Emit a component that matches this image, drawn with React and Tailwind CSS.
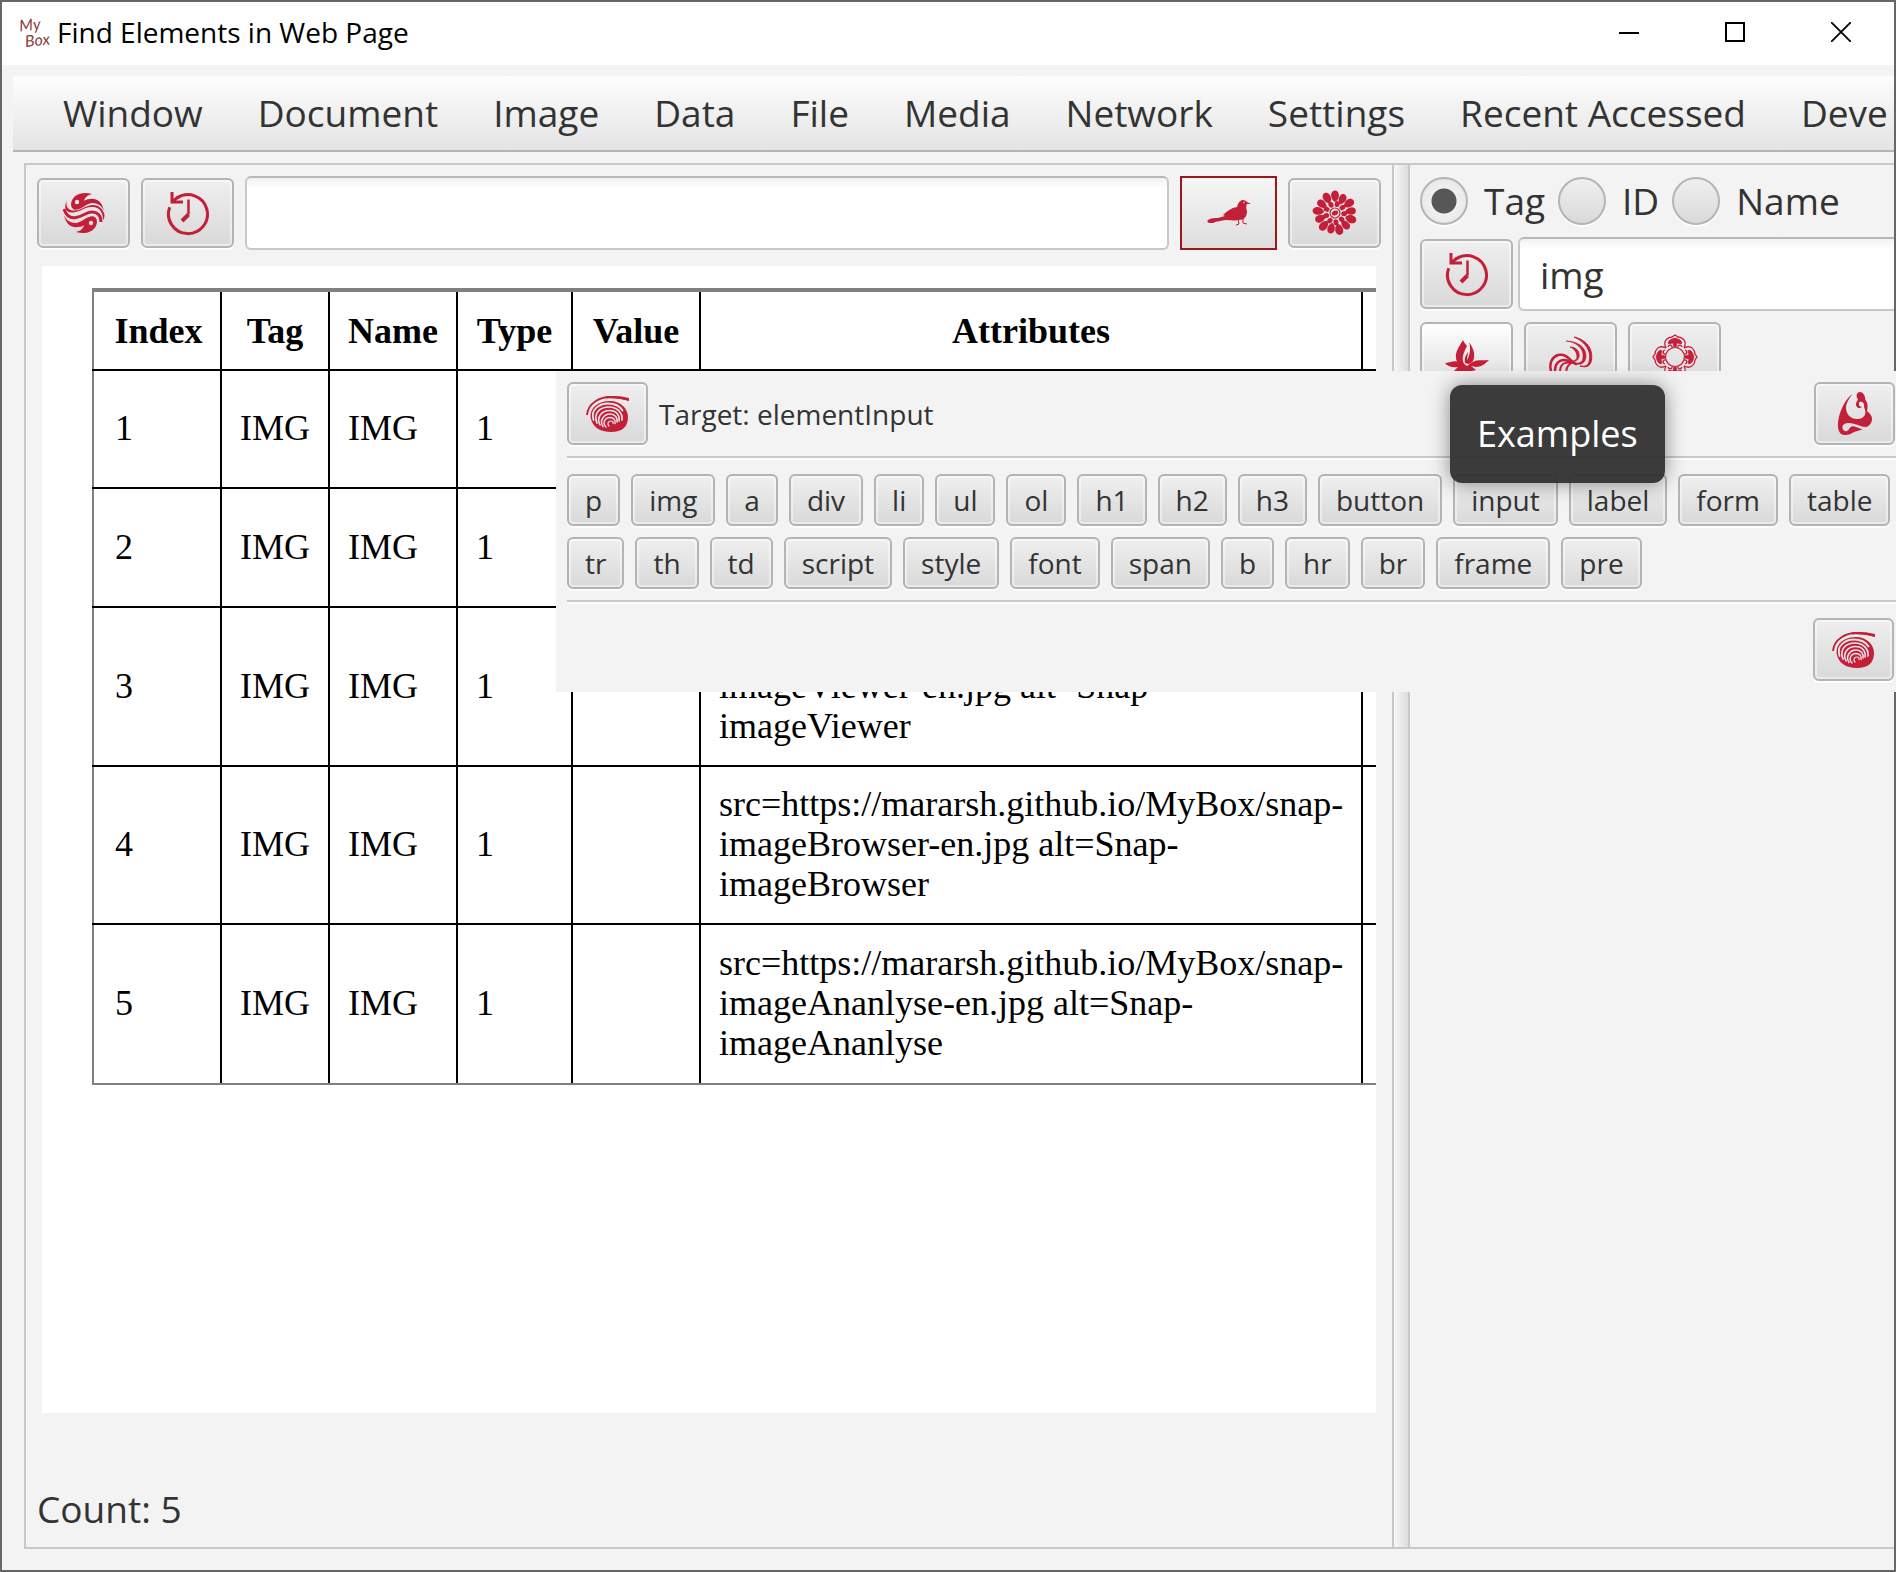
import React from "react";

const RED = "#c41f38";
const btnFace =
  "flex items-center justify-center shrink-0 rounded-md border-2 border-[#b4b4b4] bg-linear-to-b from-[#efefef] to-[#d9d9d9] shadow-[inset_0_0_0_2px_rgba(255,255,255,0.45),0_2px_0_#fdfdfd]";

function KnotIcon() {
  return (
    <svg width="42" height="42" viewBox="0 0 42 42" fill="none" stroke={RED}>
      <path d="M29 2C20-1 9 2 8 12c0 5 4 7 8 5 4-1 7-5 13-6 6 0 10 3 12 8C39 9 33 6 27 7c-3 0-5 1-6 2 1-4 4-6 8-7Z" fill={RED} stroke="none" />
      <circle cx="14" cy="10" r="2.2" fill="#e8e8e8" stroke="none" />
      <path d="M13 40c9 3 20 0 21-10 0-5-4-7-8-5-4 1-7 5-13 6-6 0-10-3-12-8 2 10 8 13 14 12 3 0 5-1 6-2-1 4-4 6-8 7Z" fill={RED} stroke="none" />
      <circle cx="28" cy="31" r="2.2" fill="#dedede" stroke="none" />
      <path d="M4 8c-4 8-1 13 6 12.500 9-1 12-6.500 20-5.500 6 0 10 5 10 13 1-1 1.500-3 1.500-5C40 16 35 13 30 13c-8 0-12 6.500-20 5.500C5 18 2 14 4 8Z" fill={RED} stroke="none" />
      <path d="M1 17c2 7 6 9.500 12 8.500 7-1 10-5.500 16-5.500 5 0 9 3 9 10" strokeWidth="3" />
    </svg>
  );
}

function HistoryIcon() {
  return (
    <svg width="46" height="46" viewBox="0 0 46 46" fill="none" stroke={RED} strokeWidth="3">
      <path d="M12 8A19.500 19.500 0 1 1 4.700 17.300" />
      <path d="M7 2v10h11" />
      <path d="M7 12l6-5" />
      <path d="M23.500 9.500v15" strokeWidth="2.500" />
      <path d="M23.500 24.500l-6.500 6.500" strokeWidth="4" />
    </svg>
  );
}

function BirdIcon() {
  return (
    <svg width="44" height="28" viewBox="0 0 44 28" fill={RED}>
      <path d="M1 21c3-2 7-2 10-2l7-2-2-1c4-4 8-7 14-8 1-4 3-7 6-7 2 0 3 1 4 2l4 2-4 0c-1 2-1 4 0 7 0 6-3 9-8 9-4 1-9 0-13 0-5 1-9 1-13 3l-4 0c-2-1-2-2-1-3Z" />
      <path d="M31 20l1 5-3 1M36 20v4l4 1" fill="none" stroke={RED} strokeWidth="1" />
      <circle cx="37" cy="3.500" r="0.700" fill="#eee" />
    </svg>
  );
}

function FlowerIcon() {
  const outer = Array.from({ length: 13 }, (_, i) => (i * 360) / 13);
  const mid = Array.from({ length: 9 }, (_, i) => i * 40 + 14);
  return (
    <svg width="46" height="46" viewBox="0 0 46 46" fill={RED}>
      {outer.map((a, i) => (
        <path
          key={a}
          d={
            i % 2
              ? "M23 13C19.500 10.500 19 7 19.500 5 20 3 21.500 2 23 2s3 1 3.500 3C27 7 26.500 10.500 23 13Z"
              : "M23 12C19.500 10 18.800 6.500 19.200 4 19.700 1.500 21.500.5 23 .5s3.300 1 3.800 3.500C27.200 6.500 26.500 10 23 12Z"
          }
          transform={`rotate(${a} 23 23)`}
        />
      ))}
      {mid.map((a) => (
        <ellipse key={a} cx="23" cy="13.800" rx="2.500" ry="3" transform={`rotate(${a} 23 23)`} />
      ))}
      <circle cx="23" cy="23" r="5" fill="none" stroke={RED} strokeWidth="1.200" />
      <ellipse cx="23" cy="23" rx="3.300" ry="2.300" transform="rotate(-20 23 23)" />
    </svg>
  );
}

function LotusIcon() {
  return (
    <svg width="46" height="46" viewBox="0 0 46 46" fill={RED}>
      <g transform="translate(1 6)">
        <path d="M18 0C14 7 10 12 11 18c0 3 2 5 4 6h4c-3-6 0-12 3-18-1-2-3-3-4-6Z" />
        <path d="M24 2c3 5 6 9 5 15 0 4-3 7-6 7l-3-1c-1-5 1-8 3-11 0 2-1 5-1 8 3-5 4-12 2-18Z" />
        <path d="M0 23c3 0 12-4 18 0l4 3 4-3c5-4 12-2 18-3-3 3-7 7-13 7l-5-1 5 4-8 2-3 5-3-5-8-1 4-4c-6 1-11-1-13-4Z" />
      </g>
    </svg>
  );
}

function SwirlIcon() {
  return (
    <svg width="46" height="46" viewBox="0 0 46 46" fill={RED} stroke={RED}>
      <g transform="translate(0 2)">
        <path d="M26 1c14 3 20 14 17 25-1 4-5 6-11 4 6 1 8-1 9-4C44 16 38 6 26 1Z" strokeWidth="1" />
        <path d="M18 5c12 0 21 7 20 16-1 7-6 9-14 6 8 1 11-1 11-6 1-8-6-15-17-16Z" strokeWidth="0.600" />
        <path d="M22 11c6 0 10 4 9 10-1 4-5 5-9 5 4-1 7-2 7-5 0-4-2-8-7-10Z" strokeWidth="0.800" />
        <g fill="none" strokeLinecap="round">
          <path d="M28 28C22 26 20 17 10 19 4 21 1 27 3 35" strokeWidth="2.500" />
          <path d="M22 26c-6-4-15-2-15 9" strokeWidth="2.500" />
          <path d="M24 27c-7-2-12 1-12 9" strokeWidth="2" />
          <path d="M23 27c-4 3-6 6-4 11" strokeWidth="2" />
        </g>
      </g>
    </svg>
  );
}

function QuatrefoilIcon() {
  return (
    <svg width="46" height="46" viewBox="0 0 46 46" fill="none" stroke={RED}>
      {[0, 90, 180, 270].map((a) => (
        <g key={a} transform={`rotate(${a} 23 23)`}>
          <path d="M14 14C10 6 17 3 20 3l3-2 3 2c3 0 10 3 6 11" strokeWidth="1.300" />
          <path d="M16 9c1-4 5-4 7-5 2 1 6 1 7 5-2 2-3 0-5 0l-1 4h-2l-1-4c-2 0-3 2-5 0Z" fill={RED} strokeWidth="0.800" />
          <path d="M16 13c1-3 5-2 4 1M30 13c-1-3-5-2-4 1" strokeWidth="1.300" />
        </g>
      ))}
      <circle cx="23" cy="23" r="9.500" strokeWidth="1.200" />
    </svg>
  );
}

function ShellIcon() {
  return (
    <svg width="44" height="38" viewBox="0 0 44 38" fill="none">
      <path d="M1 20C2 8 14 2 24 2c8 0 14 1 18.500 3" stroke={RED} strokeWidth="1.800" />
      <path d="M20 1.500c8-1 16 0 23 1.500v3C36 4 28 3 20 3.500Z" fill={RED} />
      <path d="M24 6c11 0 18 8 18 16 0 10-6 15-17 15S6 32 4.500 22C4 12 13 6 24 6Z" fill={RED} />
      <g stroke="#e6e6e6" strokeLinecap="round">
        <path d="M7.500 25C4 14 14 8.500 22 8.500c7 0 12 3 14.500 7" strokeWidth="1.800" />
        <path d="M11 28C7 18 14 12 23 12c8 0 14 6 13 13" strokeWidth="1.700" />
        <path d="M14 30c-4-8 2-14.500 9.500-14.500C30 15.500 34 20 33 26" strokeWidth="1.600" />
        <path d="M17 31.500c-4-6 1-12.500 7-12.500 5 0 8 4 7 8" strokeWidth="1.500" />
        <path d="M20 32c-4-4-1-9.500 4-9.500 4 0 6 3 5 6" strokeWidth="1.400" />
        <path d="M23 31c-2-2-1-5 2-5 1.500 0 2.500 1 2 2.500" strokeWidth="1.200" />
      </g>
    </svg>
  );
}

function FigureIcon() {
  return (
    <svg width="36" height="46" viewBox="0 0 36 46" fill={RED}>
      <path d="M15.500 3C8 8 3 20 1.500 28 0 36 1 44 8 44c4 0 6-1 9-3l8.500-2.500L19 36c-4-2-6 0-7 2-1 3-6 3-6.500-1C5 33 9 32 12 32c6 0 12 4 17 4 4-1 6-5 6-8 0-4-3-6-5-8 1-4 1-8-1.500-11C28 4 26 1 23 1c-3 0-4 3-3 6 1.500 1 1 2-.5 4-2 4 2 8 5.500 5-2.500 0-4-3-2.500-5C25 10 28 12 27 16c3 6 1 11-5 12-8 1-13-5-13-11C9 12 12 8 15.500 3Z" />
    </svg>
  );
}

function LogoMark() {
  return (
    <span aria-hidden="true" className="flex w-[30px] shrink-0 -rotate-6 flex-col font-['Lato',sans-serif] text-[16px] leading-[16px] text-[#8f3a3a] italic">
      <span>My</span>
      <span className="pl-1">Box</span>
    </span>
  );
}

function IconButton({ label, size = "large", tone = "from-[#efefef]", children }) {
  const box = size === "large" ? "h-[70px] w-[93px]" : "h-[63px] w-[81px]";
  return (
    <button type="button" aria-label={label} className={`${btnFace} ${box} ${tone}`}>
      {children}
    </button>
  );
}

function TitleBar() {
  return (
    <header className="flex h-[63px] shrink-0 items-center bg-white pb-[3px] pl-[18px] text-[28px] text-black">
      <LogoMark />
      <h1 className="ml-[7px] flex-1">Find Elements in Web Page</h1>
      <button type="button" aria-label="Minimize" className="flex h-full w-[106px] items-center justify-center">
        <svg width="20" height="20" viewBox="0 0 20 20" stroke="#000" strokeWidth="2"><path d="M0 11h20" /></svg>
      </button>
      <button type="button" aria-label="Maximize" className="flex h-full w-[106px] items-center justify-center">
        <svg width="20" height="20" viewBox="0 0 20 20" fill="none" stroke="#000" strokeWidth="2"><path d="M1 1h18v18H1z" /></svg>
      </button>
      <button type="button" aria-label="Close" className="flex h-full w-[106px] items-center justify-center">
        <svg width="20" height="20" viewBox="0 0 20 20" stroke="#000" strokeWidth="1.800"><path d="M0 0l20 20M20 0L0 20" /></svg>
      </button>
    </header>
  );
}

const menus = ["Window", "Document", "Image", "Data", "File", "Media", "Network", "Settings", "Recent Accessed", "Deve"];

function MenuBar() {
  return (
    <nav className="mt-[11px] ml-[11px] flex h-[76px] shrink-0 items-center gap-[55px] overflow-hidden border-b-2 border-[#b4b4b4] bg-linear-to-b from-[#fdfdfd] to-[#e4e4e4] pl-[50px]">
      {menus.map((m) => (
        <button key={m} type="button" className="shrink-0 whitespace-nowrap">{m}</button>
      ))}
    </nav>
  );
}

const rows = [
  ["1", "h-[118px]", ""],
  ["2", "h-[119px]", ""],
  ["3", "h-[159px]", "src=https://mararsh.github.io/MyBox/snap-imageViewer-en.jpg alt=Snap-imageViewer"],
  ["4", "h-[158px]", "src=https://mararsh.github.io/MyBox/snap-imageBrowser-en.jpg alt=Snap-imageBrowser"],
  ["5", "h-[160px]", "src=https://mararsh.github.io/MyBox/snap-imageAnanlyse-en.jpg alt=Snap-imageAnanlyse"],
];

function ResultTable() {
  const cell = "border-2 border-black px-[18px] pb-[2px] text-left group-last:border-b-[#808080]";
  return (
    <div className="mx-[5px] flex-1 overflow-hidden bg-white pt-[22px] pl-[50px] font-['Liberation_Serif',serif] text-[36px] leading-10 text-black">
      <table className="w-[1500px] table-fixed border-collapse border-2 border-t-4 border-[#808080]">
        <colgroup>
          <col className="w-[128px]" />
          <col className="w-[108px]" />
          <col className="w-[128px]" />
          <col className="w-[115px]" />
          <col className="w-[128px]" />
          <col className="w-[662px]" />
          <col />
        </colgroup>
        <thead>
          <tr className="h-[80px]">
            {["Index", "Tag", "Name", "Type", "Value", "Attributes", ""].map((h) => (
              <th key={h} className="border-2 border-t-4 border-black border-t-[#808080] p-0 text-center first:border-l-[#808080] first:pl-[3px]">{h}</th>
            ))}
          </tr>
        </thead>
        <tbody>
          {rows.map(([n, h, attrs]) => (
            <tr key={n} className={`group ${h}`}>
              <td className={`${cell} border-l-[#808080] pl-[21px]`}>{n}</td>
              <td className={cell}>IMG</td>
              <td className={cell}>IMG</td>
              <td className={cell}>1</td>
              <td className={cell} />
              <td className={cell}>{attrs}</td>
              <td className={cell} />
            </tr>
          ))}
        </tbody>
      </table>
    </div>
  );
}

function LeftPane() {
  return (
    <main className="flex min-w-0 flex-1 flex-col px-[11px] pt-[11px]">
      <div className="mb-4 flex items-center gap-[11px]">
        <IconButton label="Options"><KnotIcon /></IconButton>
        <IconButton label="Address history"><HistoryIcon /></IconButton>
        <input aria-label="Address" className="h-[74px] min-w-0 flex-1 rounded-md border-2 border-[#c8c8c8] border-t-[#b8b8b8] bg-white bg-linear-to-b from-[#f2f2f2] to-white to-15% px-5" />
        <button type="button" aria-label="Load page" className="flex h-[74px] w-[97px] shrink-0 items-center justify-center border-2 border-[#96191c] bg-linear-to-b from-[#f6f6f6] to-[#dddddd]">
          <BirdIcon />
        </button>
        <IconButton label="Operations"><FlowerIcon /></IconButton>
      </div>
      <ResultTable />
      <p className="flex h-[134px] shrink-0 items-end pb-[13px]">Count: 5</p>
    </main>
  );
}

function Radio({ label, checked }) {
  return (
    <label className="flex items-center gap-4">
      <input
        type="radio"
        name="by"
        defaultChecked={checked}
        className="h-12 w-12 appearance-none rounded-full border-2 border-[#b4b4b4] bg-linear-to-b from-[#efefef] to-[#d9d9d9] shadow-[0_2px_0_#fdfdfd] checked:bg-[radial-gradient(circle,#575757_0_12px,#f0f0f0_13px,#e2e2e2_100%)]"
      />
      {label}
    </label>
  );
}

function RightPane() {
  return (
    <aside className="w-[484px] shrink-0 overflow-hidden pt-3 pl-[10px]">
      <div className="flex h-12 items-center gap-[13px]">
        <Radio label="Tag" checked />
        <Radio label="ID" />
        <Radio label="Name" />
      </div>
      <div className="mt-3 flex items-center gap-[5px]">
        <IconButton label="Tag history"><HistoryIcon /></IconButton>
        <input aria-label="Element" defaultValue="img" className="h-[74px] min-w-0 flex-1 rounded-l-md border-2 border-r-0 border-[#c8c8c8] border-t-[#b8b8b8] bg-white bg-linear-to-b from-[#f2f2f2] to-white to-15% px-5" />
      </div>
      <div className="mt-[11px] flex gap-[11px]">
        <IconButton label="Start" tone="from-white"><LotusIcon /></IconButton>
        <IconButton label="Refresh"><SwirlIcon /></IconButton>
        <IconButton label="Recover"><QuatrefoilIcon /></IconButton>
      </div>
    </aside>
  );
}

const tagRows = [
  ["p", "img", "a", "div", "li", "ul", "ol", "h1", "h2", "h3", "button", "input", "label", "form", "table"],
  ["tr", "th", "td", "script", "style", "font", "span", "b", "hr", "br", "frame", "pre"],
];

function ExamplesPopup() {
  return (
    <section aria-label="Examples" className="absolute top-[371px] right-0 left-[556px] h-[321px] overflow-hidden bg-[#f3f3f3] pl-[11px] text-[28px] leading-9">
      <div className="flex items-center justify-between border-b-2 border-[#c8c8c8] py-[11px] pr-px shadow-[0_2px_0_#fdfdfd]">
        <div className="flex items-center gap-[11px]">
          <IconButton size="small" label="Close menu"><ShellIcon /></IconButton>
          <span>Target: elementInput</span>
        </div>
        <IconButton size="small" label="Clear"><FigureIcon /></IconButton>
      </div>
      <div className="flex flex-col gap-[11px] border-b-2 border-[#c8c8c8] pt-4 pb-[11px] shadow-[0_2px_0_#fdfdfd]">
        {tagRows.map((tags) => (
          <div key={tags[0]} className="flex gap-[11px]">
            {tags.map((t) => (
              <button key={t} type="button" className={`${btnFace} h-[52px] px-4`}>{t}</button>
            ))}
          </div>
        ))}
      </div>
      <div className="flex justify-end pt-4 pr-[2px]">
        <IconButton size="small" label="Close"><ShellIcon /></IconButton>
      </div>
    </section>
  );
}

export default function App() {
  return (
    <div className="relative h-screen overflow-hidden font-['Open_Sans',sans-serif] text-[37px] leading-[50px] text-[#333333]">
      <div className="flex h-full flex-col overflow-hidden border-2 border-[#666666] bg-[#f3f3f3]">
        <TitleBar />
        <MenuBar />
        <div className="mt-[11px] mb-[21px] ml-[22px] flex min-h-0 flex-1 border-2 border-r-0 border-[#c8c8c8]">
          <LeftPane />
          <div role="separator" className="w-[18px] shrink-0 border-x-2 border-[#c8c8c8] bg-linear-to-r from-[#f8f8f8] to-[#dddddd]" />
          <RightPane />
        </div>
      </div>
      <ExamplesPopup />
      <div role="tooltip" className="absolute top-[385px] left-[1450px] rounded-xl bg-[#303030]/95 px-[27px] py-6 text-[36px] text-white shadow-[0_0_20px_rgba(0,0,0,0.45)]">Examples</div>
    </div>
  );
}
